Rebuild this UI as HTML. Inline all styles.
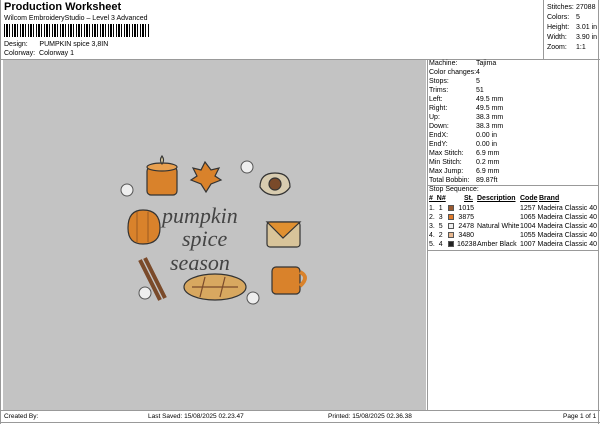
<!DOCTYPE html>
<html><head><style>
*{margin:0;padding:0;box-sizing:border-box}
body{width:600px;height:424px;background:#fff;font-family:"Liberation Sans",Arial,sans-serif;color:#000;position:relative;overflow:hidden;font-size:7px}
.a{position:absolute;white-space:nowrap}
.sw{position:absolute;width:6px;height:6px;border:1px solid #555}
</style></head><body>
<div class="a" style="left:4px;top:1px;font-size:11px;font-weight:bold">Production Worksheet</div>
<div class="a" style="left:4px;top:15px;font-size:7px">Wilcom EmbroideryStudio – Level 3 Advanced</div>
<div class="a" style="left:4px;top:24px;width:146px;height:13px;background:repeating-linear-gradient(90deg,#000 0 1px,#fff 1px 2px,#000 2px 4px,#fff 4px 5px,#000 5px 6px,#fff 6px 8px)"></div>
<div class="a" style="left:4px;top:41px">Design:&nbsp;&nbsp;&nbsp;&nbsp;&nbsp;&nbsp;PUMPKIN spice 3,8IN</div>
<div class="a" style="left:4px;top:50px">Colorway:&nbsp;&nbsp;Colorway 1</div>
<div class="a" style="left:0;top:59px;width:600px;border-top:1px solid #999"></div>
<div class="a" style="left:543px;top:0;width:1px;height:59px;background:#999"></div>
<div class="a" style="left:598px;top:0;width:1px;height:424px;background:#999"></div>
<div class="a" style="left:547px;top:3px;line-height:10px">Stitches:<br>Colors:<br>Height:<br>Width:<br>Zoom:</div>
<div class="a" style="left:576px;top:3px;line-height:10px">27088<br>5<br>3.01 in<br>3.90 in<br>1:1</div>
<div class="a" style="left:3px;top:60px;width:423px;height:350px;background:#c3c3c3"></div>
<div class="a" style="left:427px;top:60px;width:1px;height:350px;background:#999"></div>
<div class="a" style="left:429px;top:59px;line-height:9px">Machine:<br>Color changes:<br>Stops:<br>Trims:<br>Left:<br>Right:<br>Up:<br>Down:<br>EndX:<br>EndY:<br>Max Stitch:<br>Min Stitch:<br>Max Jump:<br>Total Bobbin:</div>
<div class="a" style="left:476px;top:59px;line-height:9px">Tajima<br>4<br>5<br>51<br>49.5 mm<br>49.5 mm<br>38.3 mm<br>38.3 mm<br>0.00 in<br>0.00 in<br>6.9 mm<br>0.2 mm<br>6.9 mm<br>89.87ft</div>
<div class="a" style="left:428px;top:185px;width:170px;border-top:1px solid #999"></div>
<div class="a" style="left:429px;top:186px">Stop Sequence:</div>
<div class="a" style="left:429px;top:195px;font-weight:bold;text-decoration:underline">#&nbsp;&nbsp;N#</div>
<div class="a" style="left:464px;top:195px;font-weight:bold;text-decoration:underline">St.</div>
<div class="a" style="left:477px;top:195px;font-weight:bold;text-decoration:underline">Description</div>
<div class="a" style="left:520px;top:195px;font-weight:bold;text-decoration:underline">Code</div>
<div class="a" style="left:539px;top:195px;font-weight:bold;text-decoration:underline">Brand</div>
<div class="a" style="left:429px;top:204px;line-height:9px">1.&nbsp;&nbsp;1<br>2.&nbsp;&nbsp;3<br>3.&nbsp;&nbsp;5<br>4.&nbsp;&nbsp;2<br>5.&nbsp;&nbsp;4</div>
<div class="sw" style="left:448px;top:205px;background:#9a5a30"></div>
<div class="sw" style="left:448px;top:214px;background:#e07a2a"></div>
<div class="sw" style="left:448px;top:223px;background:#eee"></div>
<div class="sw" style="left:448px;top:232px;background:#e8b890"></div>
<div class="sw" style="left:448px;top:241px;background:#222"></div>
<div class="a" style="left:457px;top:204px;line-height:9px;width:17px;text-align:right">1015<br>3875<br>2478<br>3480<br>16238</div>
<div class="a" style="left:477px;top:204px;line-height:9px"><br><br>Natural White<br><br>Amber Black</div>
<div class="a" style="left:520px;top:204px;line-height:9px">1257 Madeira Classic 40<br>1065 Madeira Classic 40<br>1004 Madeira Classic 40<br>1055 Madeira Classic 40<br>1007 Madeira Classic 40</div>
<div class="a" style="left:428px;top:250px;width:170px;border-top:1px solid #999"></div>
<div class="a" style="left:0;top:410px;width:600px;border-top:1px solid #999"></div>
<div class="a" style="left:0;top:422px;width:600px;border-top:1px solid #999"></div>
<div class="a" style="left:4px;top:413px;font-size:6.5px">Created By:</div>
<div class="a" style="left:148px;top:413px;font-size:6.5px">Last Saved: 15/08/2025 02.23.47</div>
<div class="a" style="left:328px;top:413px;font-size:6.5px">Printed: 15/08/2025 02.36.38</div>
<div class="a" style="left:563px;top:413px;font-size:6.5px">Page 1 of 1</div>
<div class="a" style="left:0;top:0;width:1px;height:424px;background:#999"></div>
<svg class="a" style="left:110px;top:150px" width="200" height="170" viewBox="0 0 200 170">
<g stroke="#333" stroke-width="1.2">
<rect x="37" y="17" width="30" height="28" rx="4" fill="#d9822b"/>
<ellipse cx="52" cy="17" rx="15" ry="4" fill="#e8a050"/>
<path d="M52 6 q3 4 0 8 q-3 -4 0 -8z" fill="#f0e0b0"/>
<path d="M95 12 l6 8 l8 -2 l-4 8 l6 4 l-10 4 l-5 8 l-5 -8 l-10 -4 l6 -4 l-4 -8 l8 2z" fill="#d9822b"/>
<path d="M150 37 q0 -14 15 -14 q15 0 15 14 q-5 8 -15 8 q-10 0 -15 -8z" fill="#d8ccb0"/><circle cx="165" cy="34" r="6" fill="#7a4a2a"/>
<path d="M18 78 q0 -18 15 -18 q17 0 17 18 q0 16 -17 16 q-15 0 -15 -16z" fill="#d9822b"/>
<path d="M27 62 v30 M38 62 v30" stroke="#8a5020" stroke-width="0.8"/>
<rect x="157" y="72" width="33" height="25" rx="3" fill="#d8c49a"/><path d="M157 72 l16 16 l17 -16z" fill="#e09030"/>
<ellipse cx="105" cy="137" rx="31" ry="13" fill="#d8a860"/>
<path d="M82 137 l46 0 M95 127 l-5 20 M115 127 l-5 20" stroke="#7a4a2a"/>
<rect x="162" y="117" width="28" height="27" rx="4" fill="#d9822b"/><path d="M190 122 q10 5 0 14" fill="none" stroke="#d9822b" stroke-width="4"/>
<path d="M30 110 l20 40 M35 108 l20 40" stroke="#7a4a2a" stroke-width="4"/>
</g>
<g fill="#eee" stroke="#555">
<circle cx="17" cy="40" r="6"/><circle cx="137" cy="17" r="6"/><circle cx="143" cy="148" r="6"/><circle cx="33" cy="148" r="0"/>
</g>
<g fill="#444" font-size="22" font-family="Liberation Serif" font-style="italic">
<text x="52" y="73">pumpkin</text>
<text x="72" y="96">spice</text>
<text x="60" y="120">season</text>
</g>
</svg>
<svg class="a" style="left:135px;top:283px" width="20" height="20"><circle cx="10" cy="10" r="6" fill="#eee" stroke="#555"/></svg>
</body></html>
